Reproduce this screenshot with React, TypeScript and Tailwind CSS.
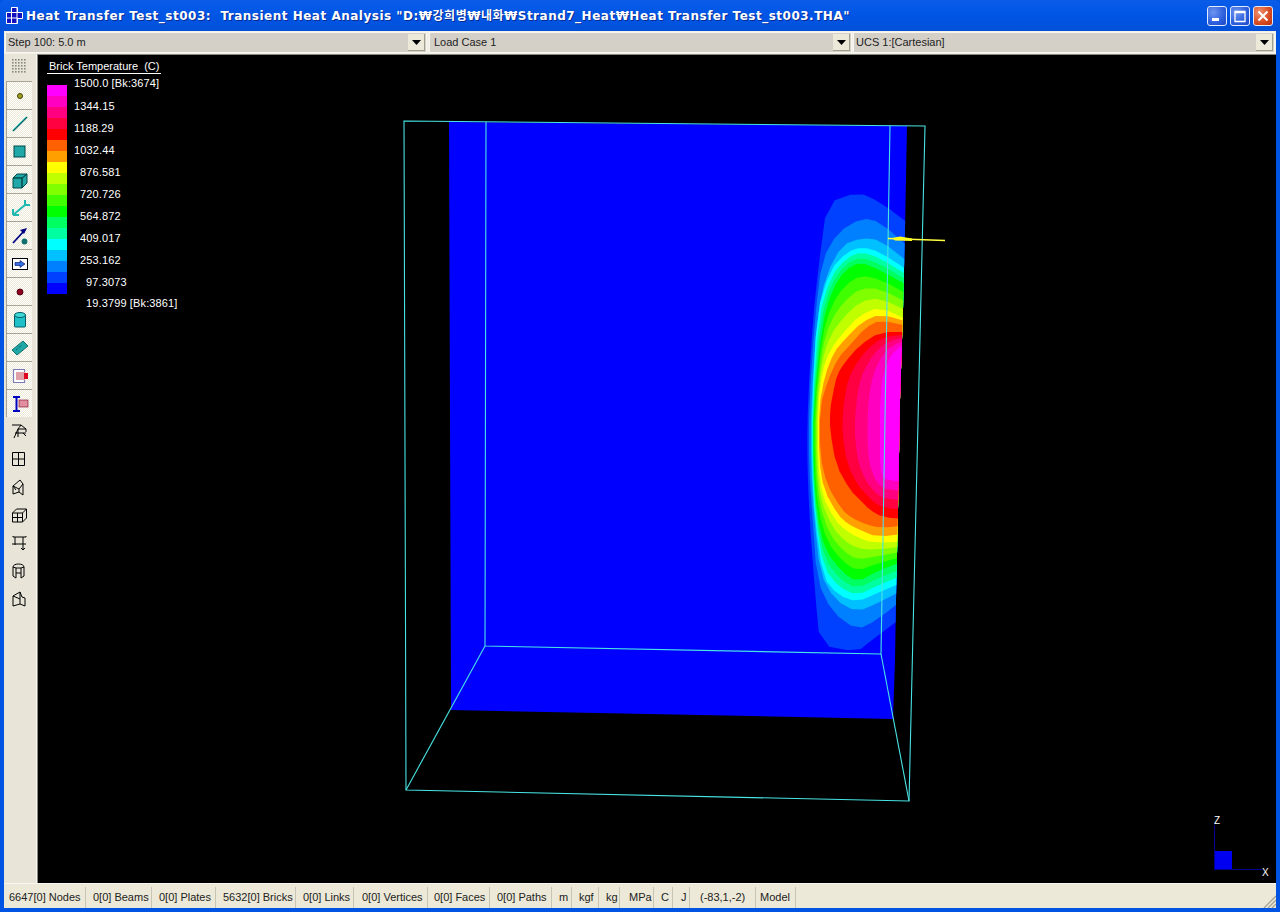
import React from "react";

const F = '"Liberation Sans", Arial, sans-serif';
const LEGEND = ["#ff00ff","#ff00c0","#ff0080","#ff0040","#ff0000","#ff6000","#ffa000","#ffff00","#c0ff00","#80ff00","#40ff00","#00ff00","#00ff60","#00ffa0","#00ffff","#00c0ff","#0080ff","#0040ff","#0000ff"];
const LABELS: [string, string][] = [
  ["1500.0 [Bk:3674]", "pl-0"],["1344.15", "pl-0"],["1188.29", "pl-0"],["1032.44", "pl-0"],
  ["876.581", "pl-[6px]"],["720.726", "pl-[6px]"],["564.872", "pl-[6px]"],["409.017", "pl-[6px]"],["253.162", "pl-[6px]"],
  ["97.3073", "pl-3"],["19.3799 [Bk:3861]", "pl-3"],
];
type P = [number, number];
const KEYS: [number, P[]][] = [
  [0,[[912,226],[880,202],[858,192],[827,203],[819,263],[813,317],[808,400],[807,450],[809,510],[815,593],[820,645],[857,652],[872,640],[912,610]]],
  [1,[[912,250],[880,222],[862,218],[838,232],[822,260],[815,317],[809,407],[809,467],[812,510],[817,580],[832,612],[857,630],[877,620],[912,592]]],
  [2,[[912,265],[880,240],[862,238],[842,245],[826,275],[817,317],[811,407],[811,467],[814,515],[820,573],[835,600],[857,612],[880,602],[912,585]]],
  [3,[[912,273],[880,252],[862,247],[847,252],[830,270],[817,313],[812,407],[812,467],[815,520],[823,577],[838,595],[857,602],[880,592],[912,578]]],
  [6,[[912,288],[880,270],[860,262],[845,270],[832,290],[822,325],[813.5,407],[813.5,467],[817,515],[825,550],[842,572],[857,582],[880,570],[912,558]]],
  [10,[[912,322],[880,307],[860,315],[843,333],[830,350],[822,372],[818,407],[818,462],[822,495],[835,520],[845,530],[857,537],[873,543],[912,541]]],
  [11,[[912,323],[880,314],[862,322],[846,338],[834,352],[825,375],[819,407],[819,460],[824,490],[838,515],[848,524],[860,530],[877,537],[912,533]]],
  [12,[[912,327],[880,320],[865,328],[850,345],[838,358],[828,380],[820,407],[820,455],[827,485],[842,510],[852,518],[865,524],[880,528],[912,525]]],
  [13,[[912,332],[880,332],[860,345],[845,362],[837,375],[833,393],[830,410],[830,430],[836,465],[850,490],[860,500],[870,510],[882,517],[912,520]]],
  [17,[[912,340],[895,350],[887,363],[882,380],[881,395],[880,410],[880,430],[880,445],[880,460],[881,470],[882,475],[884,478],[888,480],[912,483]]],
];
function smooth(pts: P[]): P[] {
  const out: P[] = [pts[0]];
  for (let i = 0; i < pts.length - 1; i++) {
    const [ax, ay] = pts[i];
    const [bx, by] = pts[i + 1];
    out.push([ax + (bx - ax) * 0.25, ay + (by - ay) * 0.25], [ax + (bx - ax) * 0.75, ay + (by - ay) * 0.75]);
  }
  out.push(pts[pts.length - 1]);
  return out;
}
function contour(level: number): string {
  let i = 0;
  while (i < KEYS.length - 2 && KEYS[i + 1][0] <= level) i++;
  const [la, a] = KEYS[i];
  const [lb, b] = KEYS[i + 1];
  const t = (level - la) / (lb - la);
  const pts: P[] = a.map((p, k) => [p[0] + (b[k][0] - p[0]) * t, p[1] + (b[k][1] - p[1]) * t]);
  return smooth(pts).map((p) => `${p[0]},${p[1]}`).join(" ");
}
const BANDS = [...LEGEND].slice(0, 18).reverse();
const PANEL = "449,122 907,126 905,230 903,310 900,400 898,510 896,600 895,660 893,719 451,710";
const CY = "#48e4e4";

function Model() {
  return (
    <svg viewBox="38 55 1238 828" className="absolute inset-0 w-full h-full">
      <defs><clipPath id="panel"><polygon points={PANEL} /></clipPath></defs>
      <polygon points={PANEL} fill="#0000ff" />
      <g clipPath="url(#panel)">
        {BANDS.map((c, i) => <polygon key={i} points={contour(i)} fill={c} />)}
      </g>
      <g stroke={CY} strokeWidth="1.1" fill="none">
        <polygon points="404,121 925,126 909,801 406,790" />
        <polyline points="486,122 485,646 881,654 890,126" />
        <line x1="485" y1="646" x2="406" y2="790" />
        <line x1="881" y1="654" x2="909" y2="801" />
      </g>
      <line x1="888" y1="238.5" x2="945" y2="240.5" stroke="#ffff40" strokeWidth="1.4" />
      <polygon points="892,238 900,236.5 912,238.5 912,241 895,240.5" fill="#ffff20" />
      <line x1="1214.5" y1="825" x2="1214.5" y2="869" stroke="#000090" />
      <line x1="1214" y1="869.5" x2="1262" y2="869.5" stroke="#000090" />
      <rect x="1215" y="851" width="17" height="18" fill="#0000f0" />
    </svg>
  );
}

const Teal = "#20a8a8";
const ICONS: React.ReactNode[] = [
  <><circle cx="10" cy="10" r="2.5" fill="#a0a020" stroke="#404000" /></>,
  <><line x1="3" y1="17" x2="17" y2="3" stroke="#006868" strokeWidth="1.6" /><line x1="3" y1="16" x2="16" y2="3" stroke="#30c0c0" strokeWidth=".8" /></>,
  <><rect x="4" y="4" width="11" height="11" fill={Teal} stroke="#004848" strokeWidth="1" /></>,
  <><path d="M3 8h9v10H3zM3 8l4-4h10l-5 4zM12 8l5-4v9l-5 5z" fill={Teal} stroke="#004848" strokeWidth="1" /></>,
  <><path d="M3 17L15 7M3 17v-6M3 17h6M15 7V2M15 7h5" fill="none" stroke="#20b8b0" strokeWidth="2" /></>,
  <><line x1="3" y1="17" x2="14" y2="5" stroke="#000080" strokeWidth="1.8" /><path d="M17 2l-7 2 4 4z" fill="#000080" /><circle cx="14.5" cy="15.5" r="2.9" fill="#107070" /></>,
  <><rect x="2.5" y="4.5" width="15" height="11" fill="#fff" stroke="#000" /><path d="M5 8.5h5V6.5l5 3.5-5 3.5v-2H5z" fill="#3070e0" stroke="#000060" strokeWidth=".6" /></>,
  <><circle cx="10" cy="10" r="3" fill="#900020" stroke="#500010" /></>,
  <><rect x="4.5" y="5" width="11" height="12" rx="1" fill="#20c0c8" stroke="#006068" /><ellipse cx="10" cy="5" rx="5.5" ry="2.5" fill="#40d8d8" stroke="#006068" /></>,
  <><path d="M2 12L13 3l5 5-11 9z" fill={Teal} stroke="#107070" /><path d="M6 12l6-5" stroke="#004848" strokeDasharray="1 1" /></>,
  <><rect x="3.5" y="3.5" width="11" height="13" fill="#fff" stroke="#000080" strokeWidth="1.2" strokeDasharray="1 1" /><rect x="6" y="6" width="9" height="8" fill="#e0a0a8" /><rect x="14" y="7" width="4" height="6" fill="#e00020" /></>,
  <><path d="M3 3h7M3 17h7M6.5 3v14" stroke="#0000c0" strokeWidth="2" /><rect x="9" y="6" width="9" height="7" fill="#e090a0" stroke="#800020" strokeWidth=".6" /></>,
];
const OUTLINES: React.ReactNode[] = [
  <path d="M3 4h9l5 4H9L5 17M12 4L9 8M9 8v8M6 12h11M17 8v3M14 12l3 3" fill="none" stroke="#000" />,
  <path d="M3.5 3.5h12v13h-12zM9.5 3.5v13M3.5 10h12" fill="none" stroke="#000" />,
  <path d="M4 9l7-6 3 4v11l-4-3-6 2zM4 9l6 3 4-5M10 12v3M4 9l3 4" fill="none" stroke="#000" />,
  <path d="M3.5 8h10v9h-10zM3.5 8l4-4h10v9l-4 4M13.5 8l4-4M8.5 8v9M3.5 12.5h10" fill="none" stroke="#000" />,
  <path d="M4 4h13M6 4v8M14 4v12M3 11h14M14 17l-2-2M14 17l2-2M4 4v-1M17 4v-1" fill="none" stroke="#000" />,
  <path d="M4 6c0-4 11-4 11 0v9l-3 2V7H7v10l-3-2zM7 7L4 6M12 7l3-1M7 12h5" fill="none" stroke="#000" />,
  <path d="M4 7l7-4 2 5 3 1v8l-5-2-7 2zM11 3v12M4 7l7 3" fill="none" stroke="#000" />,
];

function TileBtn({ children }: { children: React.ReactNode }) {
  return (
    <div className="w-[26px] h-[28px] flex items-center justify-center border-t border-l border-[#a8a597] bg-[#f5f4ee] bg-[repeating-conic-gradient(#ffffff_0_25%,#ece9d8_0_50%)] bg-[length:2px_2px]">
      <svg width="20" height="20" viewBox="0 0 20 20">{children}</svg>
    </div>
  );
}

function Combo({ text, box }: { text: string; box: string }) {
  return (
    <div className={`${box} h-[21px] flex items-center justify-between bg-[#d4d0c8] border border-[#f7f6f0] pr-[1px]`}>
      <span className="text-[11px] text-[#222]">{text}</span>
      <div className="w-[17px] h-[17px] flex items-center justify-center bg-[#ece9d8] border-r border-b border-[#a0a090]">
        <svg width="9" height="5" viewBox="0 0 9 5"><path d="M0 0h9L4.5 5z" fill="#000" /></svg>
      </div>
    </div>
  );
}

const CELLS: [string, string, string][] = [
  ["6647[0] Nodes","w-[82px]","pl-[5px]"],["0[0] Beams","w-[66px]","pl-[7px]"],["0[0] Plates","w-[64px]","pl-[7px]"],
  ["5632[0] Bricks","w-[80px]","pl-[7px]"],["0[0] Links","w-[58px]","pl-[7px]"],["0[0] Vertices","w-[74px]","pl-[8px]"],
  ["0[0] Faces","w-[62px]","pl-[6px]"],["0[0] Paths","w-[62px]","pl-[7px]"],["m","w-[20px]","pl-[7px]"],["kgf","w-[27px]","pl-[7px]"],
  ["kg","w-[21px]","pl-[7px]"],["MPa","w-[34px]","pl-[9px]"],["C","w-[19px]","pl-[7px]"],["J","w-[17px]","pl-[8px]"],
  ["(-83,1,-2)","w-[66px]","pl-[10px]"],["Model","w-[40px]","pl-[4px]"],
];

function TitleBtn({ kind }: { kind: "min" | "max" | "close" }) {
  const bg = kind === "close"
    ? "bg-[radial-gradient(circle_at_30%_30%,#f09070,#d84a20_60%,#b83010)]"
    : "bg-[radial-gradient(circle_at_30%_30%,#6f95f0,#2d5fdc_60%,#1c48c8)]";
  return (
    <div className={`w-[20px] h-[20px] rounded-[3px] border border-[#e4ecfb] flex items-center justify-center ${bg}`}>
      <svg width="14" height="14" viewBox="0 0 14 14">
        {kind === "min" && <rect x="2" y="9" width="7" height="3" fill="#fff" />}
        {kind === "max" && <path d="M2 2.5h10v10H2zM2 3.5h10" fill="none" stroke="#fff" strokeWidth="1.3" />}
        {kind === "close" && <path d="M2.5 2.5l9 9M11.5 2.5l-9 9" stroke="#fff" strokeWidth="2" />}
      </svg>
    </div>
  );
}

export default function App() {
  return (
    <div className="w-[1280px] h-[912px] flex flex-col overflow-hidden bg-[#0054e3]" style={{ fontFamily: F }}>
      <div className="h-[31px] shrink-0 flex items-center pl-[6px] pr-[7px] rounded-t-[6px] bg-gradient-to-b from-[#0a5ce8] via-[#0055e5] to-[#0350d8]">
        <svg width="17" height="17" viewBox="0 0 17 17" className="shrink-0">
          <path d="M5.5 .5h6v5h5v6h-5v5h-11v-11h5z" fill="#1010c0" stroke="#fff" />
          <path d="M.5 5.5h16M.5 11h11M5.5 .5v16M11 .5v16" stroke="#fff" fill="none" />
        </svg>
        <div className="ml-[3px] text-[12px] font-bold text-white whitespace-pre tracking-[0.5px] [text-shadow:1px_1px_0_#0a2a90]" style={{ fontFamily: '"DejaVu Sans", "Noto Sans CJK KR", sans-serif' }}>
          {'Heat Transfer Test_st003:  Transient Heat Analysis "D:₩강희병₩내화₩Strand7_Heat₩Heat Transfer Test_st003.THA"'}
        </div>
        <div className="ml-auto flex gap-[3px]">
          <TitleBtn kind="min" /><TitleBtn kind="max" /><TitleBtn kind="close" />
        </div>
      </div>
      <div className="flex-1 flex flex-col mx-[4px] mb-[4px] bg-[#ece9d8] min-h-0">
        <div className="h-[23px] shrink-0 flex items-center bg-[#f2f0e6] pl-[1px]">
          <Combo text="Step 100: 5.0 m" box="w-[422px] pl-[2px]" />
          <Combo text="Load Case 1" box="w-[423px] ml-[2px] pl-[4px]" />
          <Combo text="UCS 1:[Cartesian]" box="w-[422px] ml-[1px] pl-[2px]" />
        </div>
        <div className="flex-1 flex min-h-0">
          <div className="w-[33px] shrink-0 flex flex-col items-start pt-[1px] pl-[2px] bg-[#e8e5d8] border-r border-[#f7f6f0]">
            <div className="h-[26px] w-[26px] flex items-start justify-center pt-[3px]">
              <svg width="16" height="16" viewBox="0 0 16 16" fill="#8a8a80">
                {[0,1,2,3,4].flatMap((r) => [0,1,2,3,4].map((c) => <rect key={`${r}${c}`} x={c * 3 + 1} y={r * 3 + 1} width="1.6" height="1.6" />))}
              </svg>
            </div>
            {ICONS.map((ic, i) => <TileBtn key={i}>{ic}</TileBtn>)}
            {OUTLINES.map((ic, i) => (
              <div key={i} className="w-[26px] h-[28px] flex items-center justify-center">
                <svg width="20" height="20" viewBox="0 0 20 20">{ic}</svg>
              </div>
            ))}
          </div>
          <div className="flex-1 relative bg-black border-t border-l border-[#8a887c] overflow-hidden min-w-0">
            <Model />
            <div className="absolute left-[9px] top-[5px] text-white text-[11px] leading-none">
              <div className="w-[114px] pl-[2px] pt-[1px] h-[14px] border-b border-white whitespace-pre">Brick Temperature  (C)</div>
              <div className="flex">
                <div className="w-[20px] mt-[11px] flex flex-col">
                  {LEGEND.map((c) => <div key={c} className="h-[11px]" style={{ background: c }} />)}
                </div>
                <div className="ml-[7px] flex flex-col whitespace-nowrap tracking-[0.13px]">
                  {LABELS.map(([t, p], i) => <div key={i} className={`leading-[22px] ${p}`} style={{ marginTop: i === 0 ? -2 : 0, height: i === 0 ? 23 : i === 9 ? 21 : 22 }}>{t}</div>)}
                </div>
              </div>
            </div>
            <div className="absolute left-[1176px] top-[761px] text-white text-[10px] leading-none">Z</div>
            <div className="absolute left-[1224px] top-[813px] text-white text-[10px] leading-none">X</div>
          </div>
        </div>
        <div className="h-[25px] shrink-0 flex items-center relative border-t border-[#f7f6f0] pt-[2px]">
          {CELLS.map(([t, w, p]) => (
            <div key={t} className={`${w} ${p} h-[21px] shrink-0 flex items-center text-[11px] text-[#222] whitespace-nowrap border-r border-[#c8c5b4]`}>{t}</div>
          ))}
          <svg width="13" height="13" viewBox="0 0 13 13" className="absolute right-0 bottom-0">
            <path d="M13 1L1 13M13 5L5 13M13 9L9 13" stroke="#a8a597" strokeWidth="1.4" />
          </svg>
        </div>
      </div>
    </div>
  );
}
